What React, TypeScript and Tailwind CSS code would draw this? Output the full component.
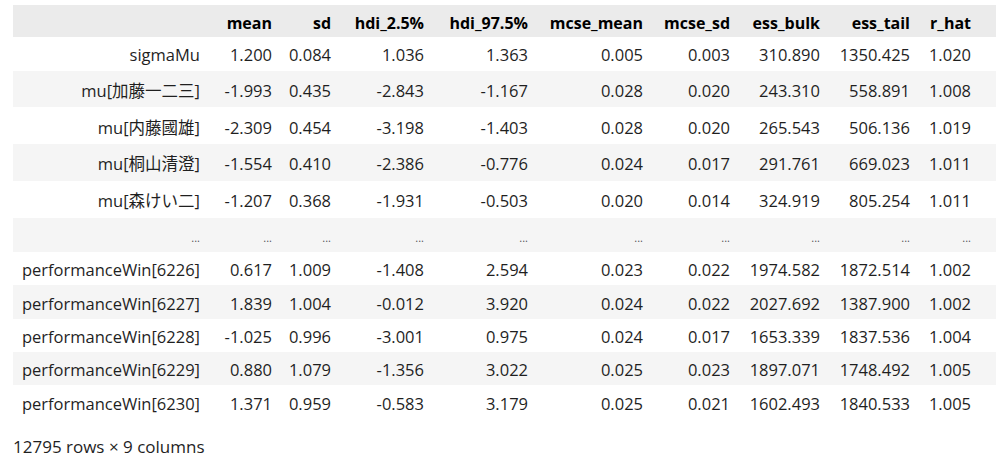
import React from "react";

const cols = ["mean", "sd", "hdi_2.5%", "hdi_97.5%", "mcse_mean", "mcse_sd", "ess_bulk", "ess_tail", "r_hat"];

const rows: string[][] = [
  ["sigmaMu", "1.200", "0.084", "1.036", "1.363", "0.005", "0.003", "310.890", "1350.425", "1.020"],
  ["mu[加藤一二三]", "-1.993", "0.435", "-2.843", "-1.167", "0.028", "0.020", "243.310", "558.891", "1.008"],
  ["mu[内藤國雄]", "-2.309", "0.454", "-3.198", "-1.403", "0.028", "0.020", "265.543", "506.136", "1.019"],
  ["mu[桐山清澄]", "-1.554", "0.410", "-2.386", "-0.776", "0.024", "0.017", "291.761", "669.023", "1.011"],
  ["mu[森けい二]", "-1.207", "0.368", "-1.931", "-0.503", "0.020", "0.014", "324.919", "805.254", "1.011"],
  ["...", "...", "...", "...", "...", "...", "...", "...", "...", "..."],
  ["performanceWin[6226]", "0.617", "1.009", "-1.408", "2.594", "0.023", "0.022", "1974.582", "1872.514", "1.002"],
  ["performanceWin[6227]", "1.839", "1.004", "-0.012", "3.920", "0.024", "0.022", "2027.692", "1387.900", "1.002"],
  ["performanceWin[6228]", "-1.025", "0.996", "-3.001", "0.975", "0.024", "0.017", "1653.339", "1837.536", "1.004"],
  ["performanceWin[6229]", "0.880", "1.079", "-1.356", "3.022", "0.025", "0.023", "1897.071", "1748.492", "1.005"],
  ["performanceWin[6230]", "1.371", "0.959", "-0.583", "3.179", "0.025", "0.021", "1602.493", "1840.533", "1.005"],
];

const heights = [
  "h-[33.7px]",
  "h-[36.8px]",
  "h-[36.8px]",
  "h-[36.8px]",
  "h-[36.8px]",
  "h-[34px]",
  "h-[33.4px]",
  "h-[33.4px]",
  "h-[33.4px]",
  "h-[33.4px]",
  "h-[33.4px]",
];

const grid =
  "grid grid-cols-[197px_72px_59px_93px_104px_115px_87px_90px_90px_61px]";

export default function App() {
  return (
    <div
      className="w-[996px] h-[462px] bg-white text-[#1f1f1f] overflow-hidden"
      style={{ fontFamily: '"Open Sans", "Noto Sans CJK JP", sans-serif' }}
    >
      <div className="pt-[5px] pl-[13px]">
        <div className={`${grid} h-[32px] items-center bg-[#ebebeb] font-bold text-[16px] text-black`}>
          <div className="pr-[10px] pt-[3px] text-right"></div>
          {cols.map((c) => (
            <div key={c} className="pr-[10px] pt-[3px] text-right whitespace-nowrap">
              {c}
            </div>
          ))}
        </div>
        {rows.map((r, i) => (
          <div
            key={i}
            className={`${grid} ${heights[i]} ${i % 2 === 0 ? "bg-white" : "bg-[#f5f5f5]"} items-center text-[16.5px]`}
          >
            {r.map((v, j) => (
              <div
                key={j}
                className={`pr-[10px] text-right whitespace-nowrap ${v === "..." ? "pt-[7px] text-[11px] text-[#555]" : "pt-[4px]"}`}
              >
                {v}
              </div>
            ))}
          </div>
        ))}
        <div className="mt-[15px] text-[17px]">12795 rows × 9 columns</div>
      </div>
    </div>
  );
}
